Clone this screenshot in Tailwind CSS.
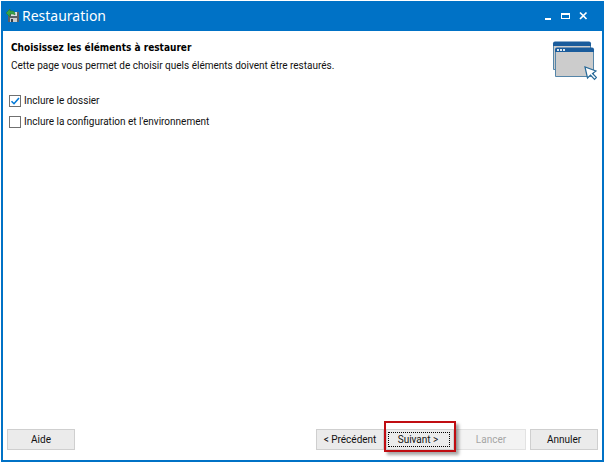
<!DOCTYPE html>
<html lang="fr">
  <head>
    <meta charset="UTF-8" />
    <meta name="viewport" content="width=device-width, initial-scale=1.0" />
    <title>Restauration</title>
    <script src="https://cdn.jsdelivr.net/npm/@tailwindcss/browser@4"></script>
  </head>
  <body class="bg-white min-h-screen flex p-px font-['Roboto','Noto_Sans',sans-serif] text-[10px] leading-4 text-[#111]">
    <div class="flex-1 flex flex-col border-2 border-t-0 border-[#0072c6]">
      <header class="h-[30px] bg-[#0072c6] text-white flex items-center pl-0.5 pr-3.5">
        <svg class="w-4 h-4 mr-px" viewBox="0 0 16 16" aria-hidden="true">
          <path d="M3 4h11v10H3z" fill="#5b6065" />
          <path d="M6 4h6v4H6z" fill="#dfe3e5" />
          <path d="M5 10h7v4H5z" fill="#c9cdd0" />
          <path d="M6 11h2v3H6z" fill="#3c4248" />
          <path d="M1 5l4-4v2h2c2 0 3 1 3 4C9 6 8 6 7 6H5v3z" fill="#3aa444" stroke="#237a34" stroke-width=".6" />
        </svg>
        <h1 class="font-['Noto_Sans',sans-serif] text-sm leading-5">Restauration</h1>
        <div class="ml-auto flex items-center gap-2">
          <button aria-label="Réduire">
            <svg class="w-2.5 h-2.5" viewBox="0 0 10 10"><path d="M3 7h6v2H3z" fill="#fff" /></svg>
          </button>
          <button aria-label="Agrandir">
            <svg class="w-2.5 h-2.5" viewBox="0 0 10 10">
              <path d="M1 2h9v6H1zM2 4v3h7V4z" fill="#fff" fill-rule="evenodd" />
            </svg>
          </button>
          <button aria-label="Fermer">
            <svg class="w-2.5 h-2.5" viewBox="0 0 10 10"><path d="M2 1.500l6.500 6.500M8.500 1.500l-6.500 6.500" stroke="#fff" stroke-width="1.7" /></svg>
          </button>
        </div>
      </header>

      <main class="flex-1 pl-1.5 pr-[5px]">
        <div class="flex justify-between pl-0.5">
          <div class="pt-2">
            <h2 class="font-['DejaVu_Sans_Condensed',sans-serif] font-bold text-black leading-[18px]">Choisissez les éléments à restaurer</h2>
            <p class="leading-[18px]">Cette page vous permet de choisir quels éléments doivent être restaurés.</p>
          </div>
          <svg class="w-12 h-12 mt-1" viewBox="0 0 48 48" aria-hidden="true">
            <path d="M4.500 9v25.500h37V9z" fill="#ccc" stroke="#5585a8" />
            <path d="M4 11V8.500q0-2 2-2h34q2 0 2 2V11z" fill="#1a5c9c" />
            <path d="M6.500 15v26.500h38V15z" fill="#ccc" stroke="#5585a8" />
            <path d="M6 17v-2.500q0-2 2-2h35q2 0 2 2V17z" fill="#1a5c9c" />
            <path d="M8 14h2v2H8zM11 14h2v2h-2zM14 14h2v2h-2z" fill="#dce8f2" />
            <path d="M36 32l2.500 11 3-3 4 4.500 2-2-4-4 3.500-2.500z" fill="#fff" stroke="#286a99" stroke-width="1.200" />
          </svg>
        </div>

        <div class="mt-2.5 flex flex-col gap-[5px]">
          <label class="flex items-center gap-[3px]">
            <input type="checkbox" checked class="peer appearance-none size-3 border border-[#707070] bg-white" />
            <svg class="hidden peer-checked:block size-3 -ml-[15px] pointer-events-none" viewBox="0 0 12 12">
              <path d="M2.500 6.200l2.500 2.500L10 3" fill="none" stroke="#0078d7" stroke-width="1.600" />
            </svg>
            Inclure le dossier
          </label>
          <label class="flex items-center gap-[3px]">
            <input type="checkbox" class="appearance-none size-3 border border-[#707070] bg-white" />
            Inclure la configuration et l'environnement
          </label>
        </div>
      </main>

      <footer class="flex items-center px-1 pb-2.5">
        <button class="w-17 h-[21px] bg-[#ebebeb] border border-[#cfcfcf]">Aide</button>
        <button class="ml-auto w-17 h-[21px] bg-[#ebebeb] border border-[#cfcfcf]">&lt; Précédent</button>
        <div class="relative ml-0.5 w-17">
          <button class="block w-full h-[21px] pl-px pr-[3px] py-0.5 bg-[#ebebeb] border border-[#cfcfcf]">
            <span class="block h-full pr-0.5 leading-[13px] border border-dotted border-black">Suivant &gt;</span>
          </button>
          <span class="absolute -top-2 -left-0.5 -right-0.5 -bottom-0.5 border-2 border-[#c00d12] shadow-[3px_3px_3px_rgba(0,0,0,0.35)] pointer-events-none"></span>
        </div>
        <button disabled class="w-[70px] h-[21px] ml-0.5 bg-[#f3f3f3] border border-[#e2e2e2] text-[#a5a5a5]">Lancer</button>
        <button class="w-17 h-[21px] ml-1 bg-[#ebebeb] border border-[#cfcfcf]">Annuler</button>
      </footer>
    </div>
  </body>
</html>
